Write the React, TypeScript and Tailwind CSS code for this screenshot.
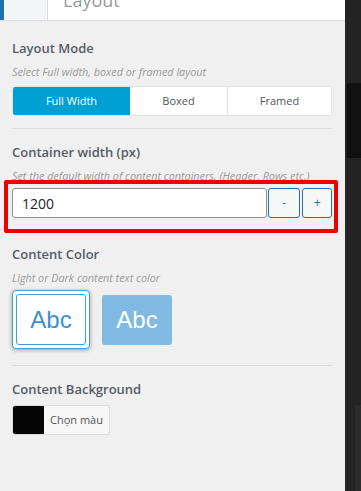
import React, { useState } from 'react';

const modes = ['Full Width', 'Boxed', 'Framed'];

const Heading: React.FC<{ children: React.ReactNode }> = ({ children }) => (
  <h3 className="text-[13px] font-semibold text-[#555d66] leading-[20px]">{children}</h3>
);

const Desc: React.FC<{ children: React.ReactNode }> = ({ children }) => (
  <p className="text-[10.8px] italic text-[#9a9a9a] leading-[14px]">{children}</p>
);

const App: React.FC = () => {
  const [mode, setMode] = useState('Full Width');
  const [width, setWidth] = useState(1200);
  const [dark, setDark] = useState(false);

  return (
    <div className="flex h-[491px] w-[361px] overflow-hidden font-['Open_Sans',sans-serif]">
      {/* Customizer panel */}
      <div className="flex w-[345px] flex-col bg-[#f0f0f0]">
        {/* Section header */}
        <div className="flex h-[21px] shrink-0 overflow-hidden border-b border-[#dcdcde]">
          <div className="w-[4px] bg-[#2271b1]" />
          <div className="w-[44px] border-r border-[#dcdcde] bg-[#f3f5f6]" />
          <div className="flex-1 overflow-hidden bg-white pl-[15px]">
            <span className="-mt-[13px] block text-[18px] leading-[26px] text-[#999]">Layout</span>
          </div>
        </div>

        <div className="flex flex-col px-[12px] pr-[13px]">
          {/* Layout Mode */}
          <div className="pt-[17px]">
            <Heading>Layout Mode</Heading>
            <div className="mt-[7px]">
              <Desc>Select Full width, boxed or framed layout</Desc>
            </div>
            <div className="mt-[7px] flex h-[30px] overflow-hidden rounded-[3px] border border-[#e2e2e2] bg-white">
              {modes.map((m, i) => (
                <button
                  key={m}
                  onClick={() => setMode(m)}
                  className={`flex items-center justify-center text-[11px] ${
                    i === 0 ? 'w-[117px]' : i === 1 ? 'w-[98px] border-r border-[#e2e2e2]' : 'flex-1'
                  } ${mode === m ? 'bg-[#00a0d2] text-white' : 'bg-white text-[#555]'}`}
                >
                  {m}
                </button>
              ))}
            </div>
          </div>

          <div className="mt-[12px] h-px bg-[#dcdcdc]" />

          {/* Container width */}
          <div className="pt-[13px]">
            <Heading>Container width (px)</Heading>
            <div className="mt-[7px]">
              <Desc>Set the default width of content containers. (Header, Rows etc.)</Desc>
            </div>
          </div>
        </div>

        <div className="mx-[4px] mt-[-3px] w-[334px] rounded-[2px] border-[4px] border-[#ee0000] pt-[4px] pb-[11px] pl-[4px] pr-[2px]">
          <div className="flex h-[30px] gap-[1px]">
            <input
              value={width}
              onChange={(e) => setWidth(Number(e.target.value) || 0)}
              className="h-full w-[257px] rounded-[3px] border border-[#8c8f94] bg-white px-[9px] text-[14px] text-[#222] outline-none"
            />
            <button
              onClick={() => setWidth(width - 1)}
              className="h-full w-[32px] rounded-[3px] border border-[#2271b1] bg-[#f6f7f7] text-[12px] text-[#2271b1]"
            >
              -
            </button>
            <button
              onClick={() => setWidth(width + 1)}
              className="ml-[1px] h-full w-[30px] rounded-[3px] border border-[#2271b1] bg-[#f6f7f7] text-[12px] text-[#2271b1]"
            >
              +
            </button>
          </div>
        </div>

        <div className="flex flex-col px-[12px] pr-[13px]">
          {/* Content Color */}
          <div className="pt-[11px]">
            <Heading>Content Color</Heading>
            <div className="mt-[7px]">
              <Desc>Light or Dark content text color</Desc>
            </div>
            <div className="mt-[5px] flex items-center gap-[12px]">
              <button
                onClick={() => setDark(false)}
                className={`flex h-[59px] w-[78px] items-center justify-center rounded-[4px] bg-white p-[3px] ${
                  !dark ? 'border border-[#3ba0e0] shadow-[0_1px_4px_rgba(0,0,0,0.35)]' : ''
                }`}
              >
                <span className="flex h-full w-full items-center justify-center rounded-[3px] border border-[#3ba0e0] font-['Liberation_Sans',sans-serif] text-[24px] text-[#3a8fd6]">
                  Abc
                </span>
              </button>
              <button
                onClick={() => setDark(true)}
                className={`flex h-[50px] w-[70px] items-center justify-center rounded-[3px] bg-[#80b9e2] font-['Liberation_Sans',sans-serif] text-[24px] text-white ${
                  dark ? 'ring-2 ring-[#3ba0e0]' : ''
                }`}
              >
                Abc
              </button>
            </div>
          </div>

          <div className="mt-[16px] h-px bg-[#dcdcdc]" />

          {/* Content Background */}
          <div className="pt-[13px]">
            <Heading>Content Background</Heading>
            <button className="mt-[6px] flex h-[30px] overflow-hidden rounded-[3px] border border-[#dcdcde] bg-[#f7f7f7]">
              <span className="h-full w-[31px] bg-[#050505]" />
              <span className="flex h-full items-center px-[6px] text-[11px] text-[#555]">Chọn màu</span>
            </button>
          </div>
        </div>
      </div>

      {/* Preview edge */}
      <div className="flex flex-1 flex-col bg-[#232323]">
        <div className="h-[83px]" />
        <div className="ml-[2px] h-[75px] bg-[#111]" />
        <div className="flex-1" />
        <div className="ml-[10px] h-[86px] bg-[#2b2b2b]" />
      </div>
    </div>
  );
};

export default App;
